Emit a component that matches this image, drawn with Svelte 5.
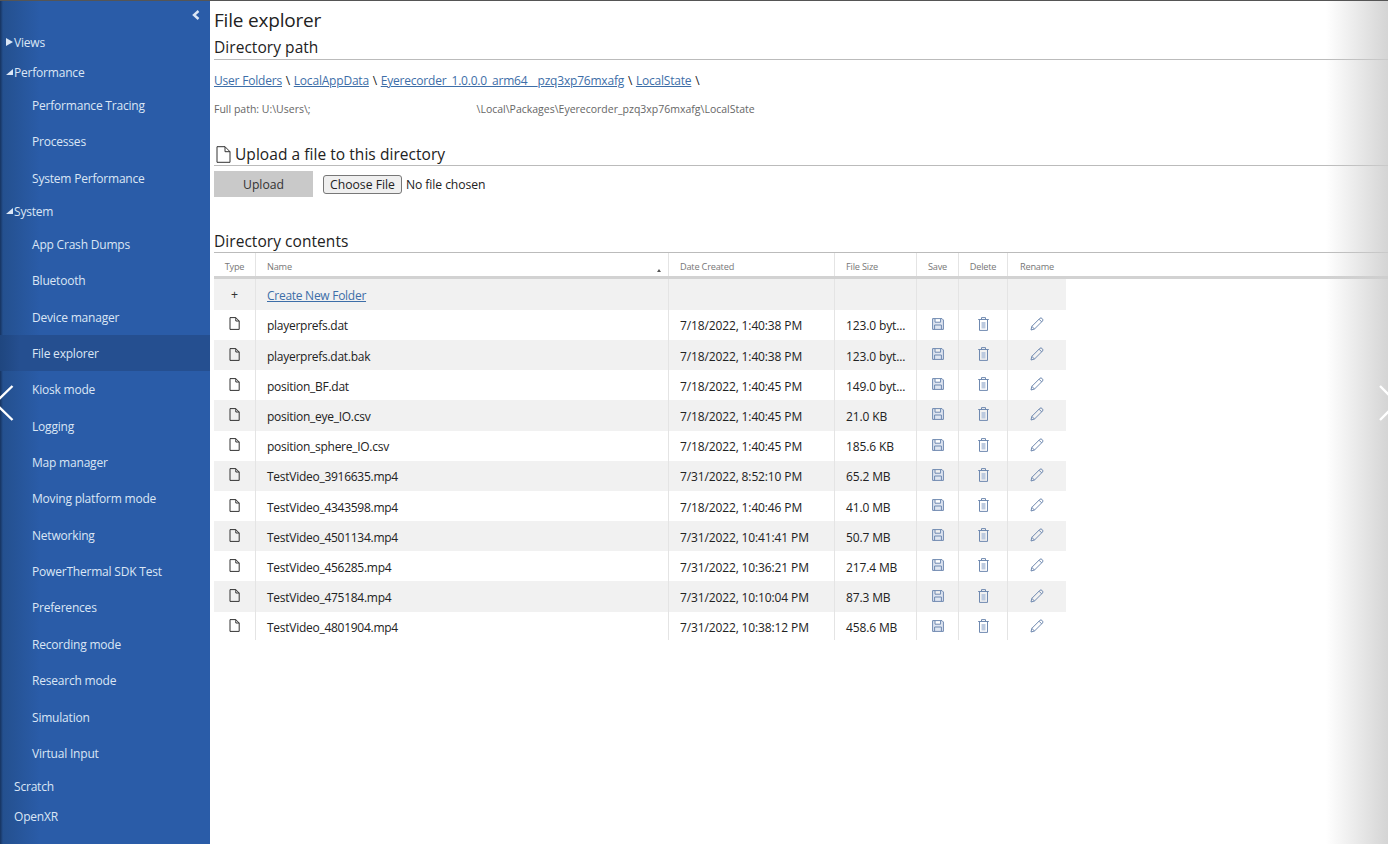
<script>
  const nav = [
    { label: 'Views', arrow: 'closed' },
    { label: 'Performance', arrow: 'open', items: ['Performance Tracing', 'Processes', 'System Performance'] },
    { label: 'System', arrow: 'open', items: ['App Crash Dumps', 'Bluetooth', 'Device manager', 'File explorer', 'Kiosk mode', 'Logging', 'Map manager', 'Moving platform mode', 'Networking', 'PowerThermal SDK Test', 'Preferences', 'Recording mode', 'Research mode', 'Simulation', 'Virtual Input'] },
    { label: 'Scratch' },
    { label: 'OpenXR' }
  ];

  const crumbs = ['User Folders', 'LocalAppData', 'Eyerecorder_1.0.0.0_arm64__pzq3xp76mxafg', 'LocalState'];

  const files = [
    { name: 'playerprefs.dat', date: '7/18/2022, 1:40:38 PM', size: '123.0 byt...' },
    { name: 'playerprefs.dat.bak', date: '7/18/2022, 1:40:38 PM', size: '123.0 byt...' },
    { name: 'position_BF.dat', date: '7/18/2022, 1:40:45 PM', size: '149.0 byt...' },
    { name: 'position_eye_IO.csv', date: '7/18/2022, 1:40:45 PM', size: '21.0 KB' },
    { name: 'position_sphere_IO.csv', date: '7/18/2022, 1:40:45 PM', size: '185.6 KB' },
    { name: 'TestVideo_3916635.mp4', date: '7/31/2022, 8:52:10 PM', size: '65.2 MB' },
    { name: 'TestVideo_4343598.mp4', date: '7/18/2022, 1:40:46 PM', size: '41.0 MB' },
    { name: 'TestVideo_4501134.mp4', date: '7/31/2022, 10:41:41 PM', size: '50.7 MB' },
    { name: 'TestVideo_456285.mp4', date: '7/31/2022, 10:36:21 PM', size: '217.4 MB' },
    { name: 'TestVideo_475184.mp4', date: '7/31/2022, 10:10:04 PM', size: '87.3 MB' },
    { name: 'TestVideo_4801904.mp4', date: '7/31/2022, 10:38:12 PM', size: '458.6 MB' }
  ];
</script>

<div class="page">
  <aside class="sidebar">
    <div class="collapse">
      <svg width="10" height="12" viewBox="0 0 10 12"><path d="M7.5 2 L3 6 L7.5 10" fill="none" stroke="#dbe6f5" stroke-width="2.4" /></svg>
    </div>
    <nav>
      {#each nav as group}
        <div class="group">
          {#if group.arrow === 'closed'}
            <svg class="arrow" width="7" height="8" viewBox="0 0 7 8"><path d="M0 0 L7 4 L0 8 Z" fill="#dbe6f5" /></svg>
          {:else if group.arrow === 'open'}
            <svg class="arrow" width="7" height="8" viewBox="0 0 7 8"><path d="M7 1 L7 7 L0 7 Z" fill="#dbe6f5" /></svg>
          {/if}
          <span>{group.label}</span>
        </div>
        {#if group.items}
          {#each group.items as item}
            <div class="item" class:active={item === 'File explorer'}>{item}</div>
          {/each}
        {/if}
      {/each}
    </nav>
  </aside>

  <main>
    <h1>File explorer</h1>
    <h2 class="rule path-title">Directory path</h2>
    <div class="crumbs">
      {#each crumbs as crumb}
        <a href="#top">{crumb}</a><span class="sep">\</span>
      {/each}
    </div>
    <div class="fullpath">Full path: U:\Users\;<span class="blank"></span>\Local\Packages\Eyerecorder_pzq3xp76mxafg\LocalState</div>

    <h2 class="rule upload-title">
      <svg width="15" height="17" viewBox="0 0 15 17"><path d="M1 .7 H9 L14 5.7 V16.3 H1 Z M9 .7 V5.7 H14" fill="none" stroke="#333" stroke-width="1" /></svg>
      Upload a file to this directory
    </h2>
    <div class="upload-row">
      <button class="upload">Upload</button>
      <span class="choose">Choose File</span>
      <span class="nofile">No file chosen</span>
    </div>

    <h2 class="rule contents-title">Directory contents</h2>
    <div class="row head">
      <div class="cell center">Type</div>
      <div class="cell pad sorted">Name<span class="sort"></span></div>
      <div class="cell pad">Date Created</div>
      <div class="cell pad">File Size</div>
      <div class="cell center">Save</div>
      <div class="cell center">Delete</div>
      <div class="cell center">Rename</div>
    </div>
    <div class="body">
      <div class="row new-folder">
        <div class="cell center plus">+</div>
        <div class="cell pad"><a href="#top">Create New Folder</a></div>
        <div class="cell"></div>
        <div class="cell"></div>
        <div class="cell"></div>
        <div class="cell"></div>
        <div class="cell"></div>
      </div>
      {#each files as file}
        <div class="row">
          <div class="cell center">
            <svg class="file-ico" width="11" height="13" viewBox="0 0 11 13"><path d="M1 .6 H6.8 L10.2 4 V12.4 H1 Z M6.8 .6 V4 H10.2" fill="none" stroke="#333" stroke-width="1" /></svg>
          </div>
          <div class="cell pad name">{file.name}</div>
          <div class="cell pad">{file.date}</div>
          <div class="cell pad">{file.size}</div>
          <div class="cell center">
            <svg class="ico" width="12" height="12" viewBox="0 0 12 12"><path d="M.6 .6 H10 L11.4 2 V11.4 H.6 Z M3 .6 V4.2 H8.6 V.6 M2.6 11.4 V7 H9.4 V11.4" fill="#dfe6f1" stroke="#6f89b0" stroke-width="1" /></svg>
          </div>
          <div class="cell center">
            <svg class="ico" width="11" height="14" viewBox="0 0 11 14"><path d="M1.5 3 V13.4 H9.5 V3 M.2 2.5 H10.8 M3.5 2.5 V.6 H7.5 V2.5" fill="none" stroke="#6f89b0" stroke-width="1" /><path d="M3.5 5 H7.5 V11.5 H3.5 Z" fill="#bccadf" /></svg>
          </div>
          <div class="cell center">
            <svg class="ico" width="14" height="14" viewBox="0 0 14 14"><path d="M1 13 L1.8 9.4 L10 1.2 Q11 .5 12.2 1.6 Q13.4 2.9 12.6 3.9 L4.5 12 Z M1.8 9.4 L4.5 12 M9 2.2 L11.7 4.9" fill="none" stroke="#6f89b0" stroke-width="1" /></svg>
          </div>
        </div>
      {/each}
    </div>
  </main>

  <div class="fade"></div>
  <svg class="chev left" width="14" height="40" viewBox="0 0 14 40"><path d="M12.5 3 L-5 20 L12.5 37" fill="none" stroke="#fff" stroke-width="2.4" /></svg>
  <svg class="chev right" width="10" height="40" viewBox="0 0 10 40"><path d="M2 3 L19 20 L2 37" fill="none" stroke="#fff" stroke-width="2.4" /></svg>
</div>

<style>
  :global(body) {
    margin: 0;
    background: #fff;
    color: #222;
    font-family: "Open Sans", "Noto Sans", sans-serif;
    overflow: hidden;
  }

  .page {
    position: relative;
    display: flex;
    height: 844px;
    overflow: hidden;
    border-top: 1px solid #555;
    box-sizing: border-box;
  }

  .sidebar {
    width: 209.5px;
    flex: none;
    background: linear-gradient(90deg, #16335f 0, #24508f 3px, #2a5ca8 40px);
    color: #dbe6f5;
    font-size: 12px;
    letter-spacing: -.2px;
    box-sizing: border-box;
  }

  .collapse {
    height: 26px;
    padding: 8px 9px 0 0;
    box-sizing: border-box;
    display: flex;
    justify-content: flex-end;
  }

  .group {
    height: 30px;
    display: flex;
    align-items: center;
    padding-left: 6px;
  }

  .group span {
    margin-left: 1px;
  }

  .group:not(:has(.arrow)) span {
    margin-left: 8px;
  }

  .item {
    height: 36.35px;
    line-height: 37.5px;
    padding-left: 32px;
  }

  .item.active {
    background: linear-gradient(90deg, #1f467f 0, #254f90 20px);
  }

  main {
    flex: 1;
    min-width: 0;
    padding-left: 4.5px;
  }

  h1 {
    margin: 6px 0 0;
    font-size: 19px;
    font-weight: 400;
    line-height: 26px;
    letter-spacing: -.2px;
  }

  h2 {
    margin: 0;
    font-size: 15.5px;
    font-weight: 400;
    letter-spacing: .05px;
  }

  .rule {
    border-bottom: 1px solid #bbb;
  }

  .path-title {
    padding-top: 3px;
    line-height: 23px;
    height: 27px;
    box-sizing: border-box;
  }

  .crumbs {
    margin-top: 12px;
    font-size: 12px;
    letter-spacing: -.2px;
    line-height: 18px;
    display: flex;
  }

  .sep {
    margin: 0 3.8px;
  }

  .crumbs a, .cell a {
    color: #3d6ea8;
    text-decoration: underline;
  }

  .fullpath {
    margin-top: 11px;
    font-size: 10.5px;
    line-height: 16px;
    color: #666;
  }

  .blank {
    display: inline-block;
    width: 166px;
  }

  .upload-title {
    margin-top: 26px;
    height: 23px;
    line-height: 24px;
    box-sizing: border-box;
    display: flex;
    align-items: center;
    gap: 4px;
    padding-left: 2px;
  }

  .upload-row {
    display: flex;
    align-items: center;
    margin-top: 5px;
    height: 26px;
    font-size: 12.2px;
  }

  .upload {
    width: 99px;
    height: 26px;
    background: #c9c9c9;
    border: 0;
    padding: 0;
    font: inherit;
    color: #333;
  }

  .choose {
    margin-left: 10px;
    width: 79px;
    height: 19px;
    border: 1px solid #777;
    border-radius: 3px;
    background: #efefef;
    line-height: 17px;
    text-align: center;
    box-sizing: border-box;
    color: #222;
  }

  .nofile {
    margin-left: 4px;
    letter-spacing: -.1px;
  }

  .contents-title {
    margin-top: 33px;
    height: 23px;
    line-height: 23px;
    box-sizing: border-box;
  }

  .row {
    display: grid;
    grid-template-columns: 41px 413px 166px 82px 42px 49px 59px;
    font-size: 12px;
    letter-spacing: -.13px;
    height: 30.2px;
  }

  .row.new-folder {
    height: 30.8px;
  }

  .head {
    grid-template-columns: 41px 413px 166px 82px 42px 49px 59px 1fr;
    height: 26px;
    font-size: 9.2px;
    letter-spacing: -.2px;
    color: #777;
    border-bottom: 3px solid #d2d2d2;
    box-sizing: border-box;
  }

  .head .cell {
    padding-top: 3px;
  }

  .body {
    width: 852px;
    height: 361px;
    overflow: hidden;
  }

  .body .row:nth-child(odd) {
    background: #f1f1f1;
  }

  .cell {
    display: flex;
    align-items: center;
    border-left: 1px solid #e4e4e4;
    box-sizing: border-box;
    min-width: 0;
    white-space: nowrap;
  }

  .body .cell {
    padding-top: 2px;
  }

  .cell:first-child {
    border-left: 0;
  }

  .cell.center {
    justify-content: center;
  }

  .cell.pad {
    padding-left: 11px;
  }

  .cell.name, .cell a {
    letter-spacing: -.27px;
  }

  .sorted {
    position: relative;
  }

  .sort {
    position: absolute;
    right: 7px;
    bottom: 4px;
    border-left: 2px solid transparent;
    border-right: 2px solid transparent;
    border-bottom: 3px solid #555;
  }

  .plus {
    font-family: "Liberation Sans", sans-serif;
    font-size: 12px;
    color: #333;
  }

  .file-ico, .ico {
    margin-top: -4px;
  }

  .fade {
    position: absolute;
    top: 0;
    right: 0;
    bottom: 0;
    width: 62px;
    background: linear-gradient(90deg, rgba(200,200,200,0), rgba(205,205,205,.85));
    pointer-events: none;
  }

  .chev {
    position: absolute;
    top: 382px;
  }

  .chev.left {
    left: 0;
  }

  .chev.right {
    right: 0;
  }
</style>
